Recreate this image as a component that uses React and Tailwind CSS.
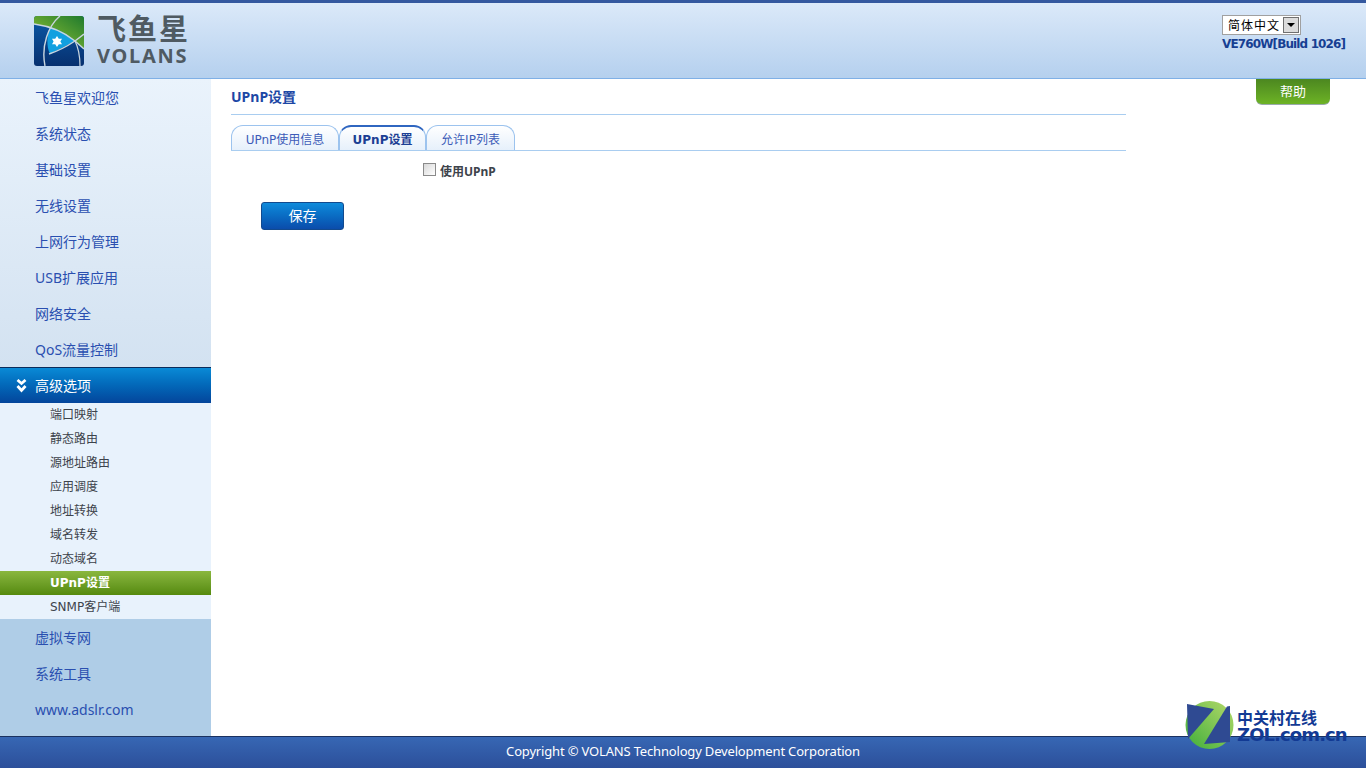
const SANS = 'font-["Noto_Sans","Noto_Sans_CJK_SC",sans-serif]'

const TOP_MENU = ['飞鱼星欢迎您', '系统状态', '基础设置', '无线设置', '上网行为管理', 'USB扩展应用', '网络安全', 'QoS流量控制']
const SUB_MENU = ['端口映射', '静态路由', '源地址路由', '应用调度', '地址转换', '域名转发', '动态域名', 'UPnP设置', 'SNMP客户端']
const BOTTOM_MENU = ['虚拟专网', '系统工具', 'www.adslr.com']
const TABS = ['UPnP使用信息', 'UPnP设置', '允许IP列表']

function VolansMark() {
  return (
    <svg width="50" height="50" viewBox="0 0 50 50" className="shrink-0">
      <defs>
        <linearGradient id="vb" x1="0" y1="0" x2="0" y2="1">
          <stop offset="0" stopColor="#0a5aa8" />
          <stop offset="1" stopColor="#07306f" />
        </linearGradient>
        <linearGradient id="vg" x1="1" y1="0" x2="0" y2="1">
          <stop offset="0" stopColor="#1f7a2e" />
          <stop offset="1" stopColor="#9ac832" />
        </linearGradient>
      </defs>
      <rect width="50" height="50" rx="3" fill="url(#vb)" />
      <path d="M0 3a3 3 0 0 1 3-3h44a3 3 0 0 1 3 3v30L41 25C30 16 15 10 0 8z" fill="url(#vg)" />
      <path d="M16 11C25 13 34 19 41 25L16 38C12 30 13 19 16 11z" fill="#12a0e0" />
      <path d="M0 8C15 10 30 16 41 25L50 33" fill="none" stroke="#c9d6df" strokeWidth="1.400" />
      <path d="M50 18L41 25C32 31 24 35 15 38" fill="none" stroke="#c9d6df" strokeWidth="1.400" />
      <path d="M26 0C14 10 7 30 11 50" fill="none" stroke="#c9d6df" strokeWidth="1.400" />
      <path d="M41 25C45 33 46 41 46 50" fill="none" stroke="#c9d6df" strokeWidth="1.200" />
      <path d="M23 20l1.800 2.700H28l-1.600 2.800 1.600 2.800h-3.200L23 31l-1.800-2.700H18l1.600-2.800-1.600-2.800h3.200z" fill="#fff" />
    </svg>
  )
}

function ZolMark() {
  return (
    <svg width="49" height="48" viewBox="0 0 49 48">
      <defs>
        <linearGradient id="zg" x1="1" y1="0" x2="0" y2="1">
          <stop offset="0" stopColor="#b5d96a" />
          <stop offset="1" stopColor="#3fae3a" />
        </linearGradient>
      </defs>
      <circle cx="24.500" cy="24" r="24" fill="url(#zg)" />
      <polygon points="2,3 29,8 3,38" fill="#2f4a92" />
      <polygon points="45,5 45,41 19,43 42,5.500" fill="#2f4a92" />
    </svg>
  )
}

export default function App() {
  return (
    <div className={`flex h-[768px] flex-col overflow-hidden bg-white ${SANS}`}>
      <header className="flex h-[79px] shrink-0 items-start justify-between border-t-[3px] border-b border-t-[#34589f] border-b-[#7fb0e6] bg-gradient-to-b from-[#dbe9f9] to-[#b5d0ee] pr-5 pl-[34px]">
        <div className="mt-3 flex items-center">
          <VolansMark />
          <div className="ml-[13px] flex flex-col text-[#4f5a62]">
            <span className="text-[29px] leading-[28px] font-bold tracking-[2px]">飞鱼星</span>
            <span className="mt-[2px] text-[20px] leading-[21px] font-bold tracking-[1.700px]">VOLANS</span>
          </div>
        </div>
        <div className="mt-3 flex w-[124px] flex-col items-start">
          <div className="flex h-5 w-[79px] items-center justify-between border border-[#a0a0a0] bg-white pr-px pl-[5px] text-[12px] leading-none tracking-[1px] text-black">
            <span className='font-["Noto_Sans_CJK_SC",sans-serif]'>简体中文</span>
            <span className="flex h-4 w-4 items-center justify-center border border-[#707070] bg-[#dcdcdc]">
              <span className="h-0 w-0 border-x-[4px] border-t-[4px] border-x-transparent border-t-black" />
            </span>
          </div>
          <span className='mt-[1px] text-[12px] leading-[16px] font-bold tracking-[-0.87px] whitespace-nowrap text-[#173f92] font-["DejaVu_Sans",sans-serif]'>VE760W[Build 1026]</span>
        </div>
      </header>

      <div className="flex min-h-0 flex-1">
        <aside className="flex w-[211px] shrink-0 flex-col bg-[#afcde7]">
          <nav className="bg-gradient-to-b from-[#eaf3fc] to-[#d3e2f1]">
            {TOP_MENU.map(item => (
              <div key={item} className="flex h-9 items-center pl-[35px] text-[14px] text-[#2a4fb0]">{item}</div>
            ))}
          </nav>
          <div className="flex h-9 items-center gap-2 border-t border-t-[#0a2c5c] bg-gradient-to-b from-[#0a8ad6] to-[#04459b] pl-4 text-[14px] text-white">
            <svg width="11" height="14" viewBox="0 0 11 14">
              <path d="M1.500 1l4 3.500 4-3.500M1.500 7l4 4.500 4-4.500" fill="none" stroke="#fff" strokeWidth="2.800" />
            </svg>
            <span>高级选项</span>
          </div>
          <div className='bg-[#e8f2fc] font-["DejaVu_Sans","Noto_Sans_CJK_SC",sans-serif]'>
            {SUB_MENU.map(item => (
              item === 'UPnP设置' ? (
                <div key={item} className="flex h-6 items-center bg-gradient-to-b from-[#8ab73e] to-[#558a0c] pl-[50px] text-[12px] font-bold text-white">{item}</div>
              ) : (
                <div key={item} className="flex h-6 items-center pl-[50px] text-[12px] text-[#3d434b]">{item}</div>
              )
            ))}
          </div>
          <div>
            {BOTTOM_MENU.map(item => (
              <div key={item} className="flex h-9 items-center pl-[35px] text-[14px] text-[#2a4fb0]">{item}</div>
            ))}
          </div>
        </aside>

        <main className="flex min-w-0 flex-1 items-start">
          <section className="ml-5 w-[895px]">
            <h1 className="flex h-9 items-center border-b border-b-[#a9cdf0] text-[14px] font-bold text-[#1c47a5]">UPnP设置</h1>
            <div className='mt-[10px] flex h-[26px] border-b border-b-[#a9cdf0] font-["DejaVu_Sans","Noto_Sans_CJK_SC",sans-serif]'>
              {TABS.map((tab, i) => (
                i === 1 ? (
                  <div key={tab} className="flex w-[87px] items-center justify-center rounded-t-[12px] border-x border-t-2 border-x-[#9cc3ee] border-t-[#2f66c0] bg-gradient-to-b from-white to-[#e6f0fb] pt-[2px] text-[12px] font-bold text-[#1c3f94]">{tab}</div>
                ) : (
                  <div key={tab} className={`flex items-center justify-center rounded-t-[12px] border-x border-t border-[#9cc3ee] bg-gradient-to-b from-white to-[#e6f0fb] pt-[3px] text-[12px] text-[#3d5cb8] ${i === 0 ? 'w-[108px]' : 'w-[89px]'}`}>{tab}</div>
                )
              ))}
            </div>
            <label className="mt-[12px] ml-[192px] flex items-center gap-[4px] text-[12px] font-bold text-[#3d434b]">
              <input type="checkbox" className="-mt-[5px] h-[13px] w-[13px] appearance-none border border-[#8a8a8a] bg-gradient-to-br from-[#d8d8d8] to-white" />
              <span>使用UPnP</span>
            </label>
            <button className="mt-[21px] ml-[30px] flex h-[28px] w-[83px] items-center justify-center rounded-[3px] border border-[#124a8e] bg-gradient-to-b from-[#0f8bdb] to-[#0b4cab] pb-px text-[14px] text-white">保存</button>
          </section>
          <div className="ml-[130px] flex h-[26px] w-[74px] items-center justify-center rounded-b-[6px] border-b border-b-[#9aa] bg-gradient-to-b from-[#4c8720] to-[#6db325] text-[13px] text-white">帮助</div>
        </main>
      </div>

      <footer className="flex h-[32px] shrink-0 items-center justify-center border-t border-t-[#1a3160] bg-gradient-to-b from-[#3767b4] to-[#2c4f9a] pb-px text-[13px] tracking-[-0.17px] text-white">
        Copyright © VOLANS Technology Development Corporation
      </footer>

      <div className="absolute top-[701px] left-[1185px] flex items-start">
        <ZolMark />
        <div className="ml-[3px] flex flex-col text-[#123a94]">
          <span className='mt-[6px] text-[16px] leading-[20px] font-bold font-["Noto_Sans_CJK_SC",sans-serif]'>中关村在线</span>
          <span className='-mt-[1px] text-[18px] leading-[17px] font-bold tracking-[-0.9px] font-["DejaVu_Sans",sans-serif]'>ZOL.com.cn</span>
        </div>
      </div>
    </div>
  )
}
